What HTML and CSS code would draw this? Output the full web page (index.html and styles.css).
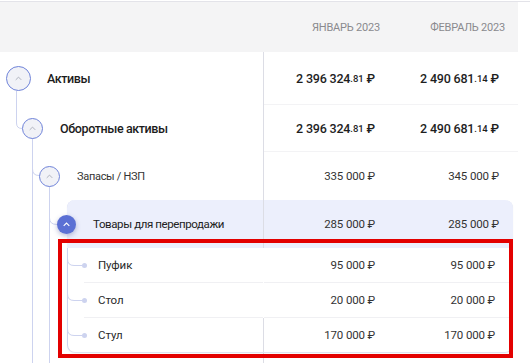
FILE: index.html
```html
<!DOCTYPE html>
<html lang="ru">
<head>
<meta charset="utf-8">
<link rel="stylesheet" href="styles.css">
</head>
<body>
<div class="table">
  <div class="head">
    <div class="name-col"></div>
    <div class="val-col hv1">ЯНВАРЬ 2023</div>
    <div class="val-col hv2">ФЕВРАЛЬ 2023</div>
  </div>
  <div class="body">
    <svg class="tree" width="120" height="311" viewBox="0 0 120 311">
      <g fill="none" stroke="#cdd3ef" stroke-width="1">
        <path d="M16.5 39 V71 Q16.5 76.5 22 76.5"/>
        <path d="M32.5 86 V311"/>
        <path d="M32.5 117 Q32.5 123.5 39 123.5"/>
        <path d="M49.5 133 V311"/>
        <path d="M49.5 166 Q49.5 172.5 57 172.5"/>
        <path d="M67.5 207 Q67.5 213.5 74 213.5 H82"/>
        <path d="M67.5 242 Q67.5 248.5 74 248.5 H82"/>
        <path d="M67.5 277 Q67.5 283.5 74 283.5 H82"/>
      </g>
      <g fill="#cdd3ef">
        <circle cx="84.5" cy="213.5" r="2.5"/>
        <circle cx="84.5" cy="248.5" r="2.5"/>
        <circle cx="84.5" cy="283.5" r="2.5"/>
      </g>
    </svg>

    <div class="row r1">
      <div class="name-col">
        <span class="tog t1"><svg viewBox="0 0 10 6"><path d="M1 5 L5 1 L9 5"/></svg></span>
        <span class="label l1">Активы</span>
      </div>
      <div class="val-col v1 strong">2 396 324<small>.81</small>&nbsp;₽</div>
      <div class="val-col v2 strong">2 490 681<small>.14</small>&nbsp;₽</div>
    </div>

    <div class="row r2">
      <div class="name-col">
        <span class="tog t2"><svg viewBox="0 0 10 6"><path d="M1 5 L5 1 L9 5"/></svg></span>
        <span class="label l2">Оборотные активы</span>
      </div>
      <div class="val-col v1 strong">2 396 324<small>.81</small>&nbsp;₽</div>
      <div class="val-col v2 strong">2 490 681<small>.14</small>&nbsp;₽</div>
    </div>

    <div class="row r3">
      <div class="name-col">
        <span class="tog t3"><svg viewBox="0 0 10 6"><path d="M1 5 L5 1 L9 5"/></svg></span>
        <span class="label l3">Запасы / НЗП</span>
      </div>
      <div class="val-col v1">335 000 ₽</div>
      <div class="val-col v2">345 000 ₽</div>
    </div>

    <div class="card">
      <div class="crow chead">
        <div class="cname">
          <span class="tog t4"><svg viewBox="0 0 10 6"><path d="M1 5 L5 1 L9 5"/></svg></span>
          <span class="label l4">Товары для перепродажи</span>
        </div>
        <div class="cval cv1">285 000 ₽</div>
        <div class="cval cv2 hv">285 000 ₽</div>
      </div>
      <div class="crow child">
        <div class="cname"><span class="label l5">Пуфик</span></div>
        <div class="cval cv1">95 000 ₽</div>
        <div class="cval cv2">95 000 ₽</div>
      </div>
      <div class="crow child">
        <div class="cname"><span class="label l5">Стол</span></div>
        <div class="cval cv1">20 000 ₽</div>
        <div class="cval cv2">20 000 ₽</div>
      </div>
      <div class="crow child last">
        <div class="cname"><span class="label l5">Стул</span></div>
        <div class="cval cv1">170 000 ₽</div>
        <div class="cval cv2">170 000 ₽</div>
      </div>
    </div>
    <div class="tail">
      <div class="name-col"></div>
    </div>
    <div class="mark"></div>
  </div>
</div>
</body>
</html>
```

FILE: styles.css
```css
* { box-sizing: border-box; }
html, body { margin: 0; padding: 0; background: #fff; }
body {
  font-family: "Roboto", "Noto Sans", sans-serif;
  color: #222;
  width: 530px;
  height: 363px;
  overflow: hidden;
}
.table {
  margin-top: 1px;
  border-top: 1px solid #e3e3e9;
  width: 530px;
}
.head {
  display: flex;
  width: 518px;
  height: 50px;
  background: #f4f4f5;
  align-items: center;
  font-size: 11px;
  letter-spacing: -0.2px;
  color: #8a8a8e;
}
.head .name-col { border-right: none; height: 100%; }
.name-col {
  width: 264px;
  flex: none;
  display: flex;
  align-items: center;
  border-right: 1px solid #dcdde5;
  height: 100%;
}
.val-col {
  flex: none;
  text-align: right;
  height: 100%;
  display: flex;
  align-items: center;
  justify-content: flex-end;
  white-space: nowrap;
}
.val-col.v1, .val-col.hv1 { width: 126px; }
.val-col.v2, .val-col.hv2 { width: 128px; }
.hv1 { padding-right: 10px; }
.hv2 { padding-right: 13px; }
.v1 { padding-right: 15px; }
.v2 { padding-right: 19px; }

.body { position: relative; }
.tree { position: absolute; left: 0; top: 0; z-index: 2; pointer-events: none; }

.row {
  display: flex;
  width: 518px;
  font-size: 11.5px;
  letter-spacing: -0.15px;
  color: #333;
}
.row .val-col { border-bottom: 1px solid #f3f3f5; }
.r1 { height: 53px; }
.r2 { height: 47px; }
.r3 { height: 48px; }
.r3 .val-col { border-bottom: none; }
.strong { font-size: 12.5px; font-weight: 500; color: #1e1e1e; letter-spacing: -0.2px; }
.strong small { font-size: 9.5px; font-weight: 500; letter-spacing: 0; }

.tog {
  flex: none;
  border-radius: 50%;
  display: flex;
  align-items: center;
  justify-content: center;
  background: #f1f2f7;
  border: 1.5px solid #6f83d9;
  position: relative;
  z-index: 3;
}
.tog svg { width: 7px; height: 5px; fill: none; stroke: #a9acb8; stroke-width: 1.3; }
.t1 { width: 25px; height: 25px; margin-left: 6px; margin-right: 16px; }
.t2 { width: 21px; height: 21px; margin-left: 22px; margin-right: 17px; }
.t3 { width: 21px; height: 21px; margin-left: 39px; margin-right: 17px; }
.t4 { width: 19px; height: 19px; margin-left: -11px; margin-right: 17px;
  background: #5b70d4; border: none; box-shadow: 0 2px 5px rgba(60, 70, 140, 0.35); }
.t4 svg { stroke: #fff; stroke-width: 1.6; }

.label { white-space: nowrap; }
.l1 { font-size: 12.5px; font-weight: 500; color: #1c1c1c; letter-spacing: -0.4px; }
.l2 { font-size: 12.5px; font-weight: 500; color: #1c1c1c; letter-spacing: -0.4px; }
.l3 { font-size: 11px; color: #333; letter-spacing: -0.3px; }
.l4 { font-size: 11.5px; color: #222; letter-spacing: -0.4px; }
.l5 { font-size: 11.5px; color: #2a2a2a; margin-left: 30px; letter-spacing: -0.1px; }

.card {
  margin-left: 67px;
  width: 446px;
  border: 1px solid #dfe2ef;
  border-left-color: #cdd3ef;
  border-top: none;
  border-radius: 8px;
  box-shadow: 0 1px 2px rgba(0,0,0,0.04);
  position: relative;
}
.crow { display: flex; font-size: 11.5px; letter-spacing: -0.15px; color: #333; }
.chead { height: 48px; background: #eceffc; border-radius: 8px 8px 0 0; margin-left: -1px; margin-right: -1px; padding-left: 1px; padding-right: 1px; }
.child { height: 35px; }
.child.last { height: 34px; }
.cname {
  width: 196px;
  flex: none;
  display: flex;
  align-items: center;
  border-right: 1px solid #dcdde5;
}
.cval {
  flex: none;
  display: flex;
  align-items: center;
  justify-content: flex-end;
  white-space: nowrap;
}
.cv1 { width: 126px; padding-right: 15px; }
.cv2 { width: 122px; padding-right: 17px; }
.cv2.hv { padding-right: 13px; }
.child .cval { border-bottom: 1px solid #f0f0f3; }
.child.last .cval { border-bottom: none; }
.child:not(.last) .cname { border-image: linear-gradient(to right, transparent 16px, #f0f0f3 16px) 1; border-image-slice: 0 0 1 0; border-bottom: 1px solid; border-right: 1px solid #dcdde5; }

.tail { height: 20px; display: flex; }
.tail .name-col { height: 20px; }

.mark {
  position: absolute;
  left: 58px;
  top: 187px;
  width: 455px;
  height: 119px;
  border: 4px solid #e30000;
  z-index: 5;
  pointer-events: none;
}
```
